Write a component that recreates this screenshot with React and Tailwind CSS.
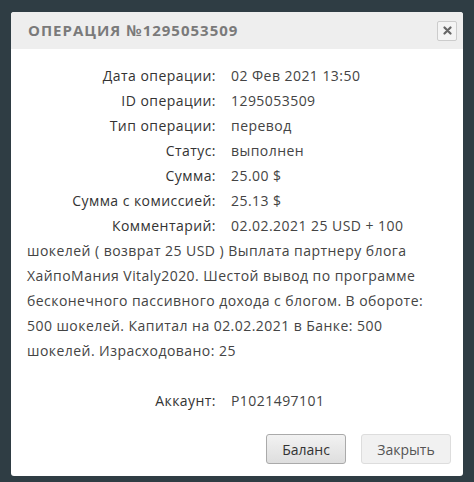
import React from 'react';

const rows = [
  ['Дата операции:', '02 Фев 2021 13:50'],
  ['ID операции:', '1295053509'],
  ['Тип операции:', 'перевод'],
  ['Статус:', 'выполнен'],
  ['Сумма:', '25.00 $'],
  ['Сумма с комиссией:', '25.13 $'],
];

const Row = ({ label, children }) => (
  <div>
    <span className="inline-block w-[189px] text-right font-medium text-[#333] mr-[15px]">{label}</span>
    {children}
  </div>
);

export default function App() {
  return (
    <div className="w-[474px] h-[482px] bg-[#2f3d44] pt-[12px] px-[11px] font-['Open_Sans',sans-serif]">
      <div className="w-[452px] bg-white rounded-[3px] overflow-hidden">
        <div className="h-[37px] bg-[#eeeeee] flex items-center justify-between pl-[17px] pr-[6px]">
          <span className="text-[15px] font-bold tracking-[1px] text-[#7a7a7a]">ОПЕРАЦИЯ №1295053509</span>
          <button className="w-[20px] h-[20px] border border-[#ccc] rounded-[2px] bg-[#f4f4f4] flex items-center justify-center">
            <svg width="9" height="9" viewBox="0 0 9 9">
              <path d="M1.5 1.5 L7.5 7.5 M7.5 1.5 L1.5 7.5" stroke="#666" strokeWidth="2.2" strokeLinecap="round" />
            </svg>
          </button>
        </div>
        <div className="px-[16px] pt-[14px] text-[14px] leading-[25px] tracking-[0.45px] text-[#444]">
          {rows.map(([l, v]) => (
            <Row key={l} label={l}>{v}</Row>
          ))}
          <Row label="Комментарий:">
            02.02.2021 25 USD + 100 шокелей ( возврат 25 USD ) Выплата партнеру блога ХайпоМания Vitaly2020. Шестой вывод по программе бесконечного пассивного дохода с блогом. В обороте: 500 шокелей. Капитал на 02.02.2021 в Банке: 500 шокелей. Израсходовано: 25
          </Row>
          <div className="h-[25px]" />
          <Row label="Аккаунт:">P1021497101</Row>
        </div>
        <div className="flex justify-end gap-[15px] px-[12px] pt-[21px] pb-[12px]">
          <button className="w-[80px] h-[30px] rounded-[3px] border border-[#aaa] bg-gradient-to-b from-[#f2f2f2] to-[#dedede] text-[14px] text-[#333]">
            Баланс
          </button>
          <button className="w-[90px] h-[30px] rounded-[3px] border border-[#ddd] bg-[#f1f1f1] text-[14px] text-[#555]">
            Закрыть
          </button>
        </div>
      </div>
    </div>
  );
}
